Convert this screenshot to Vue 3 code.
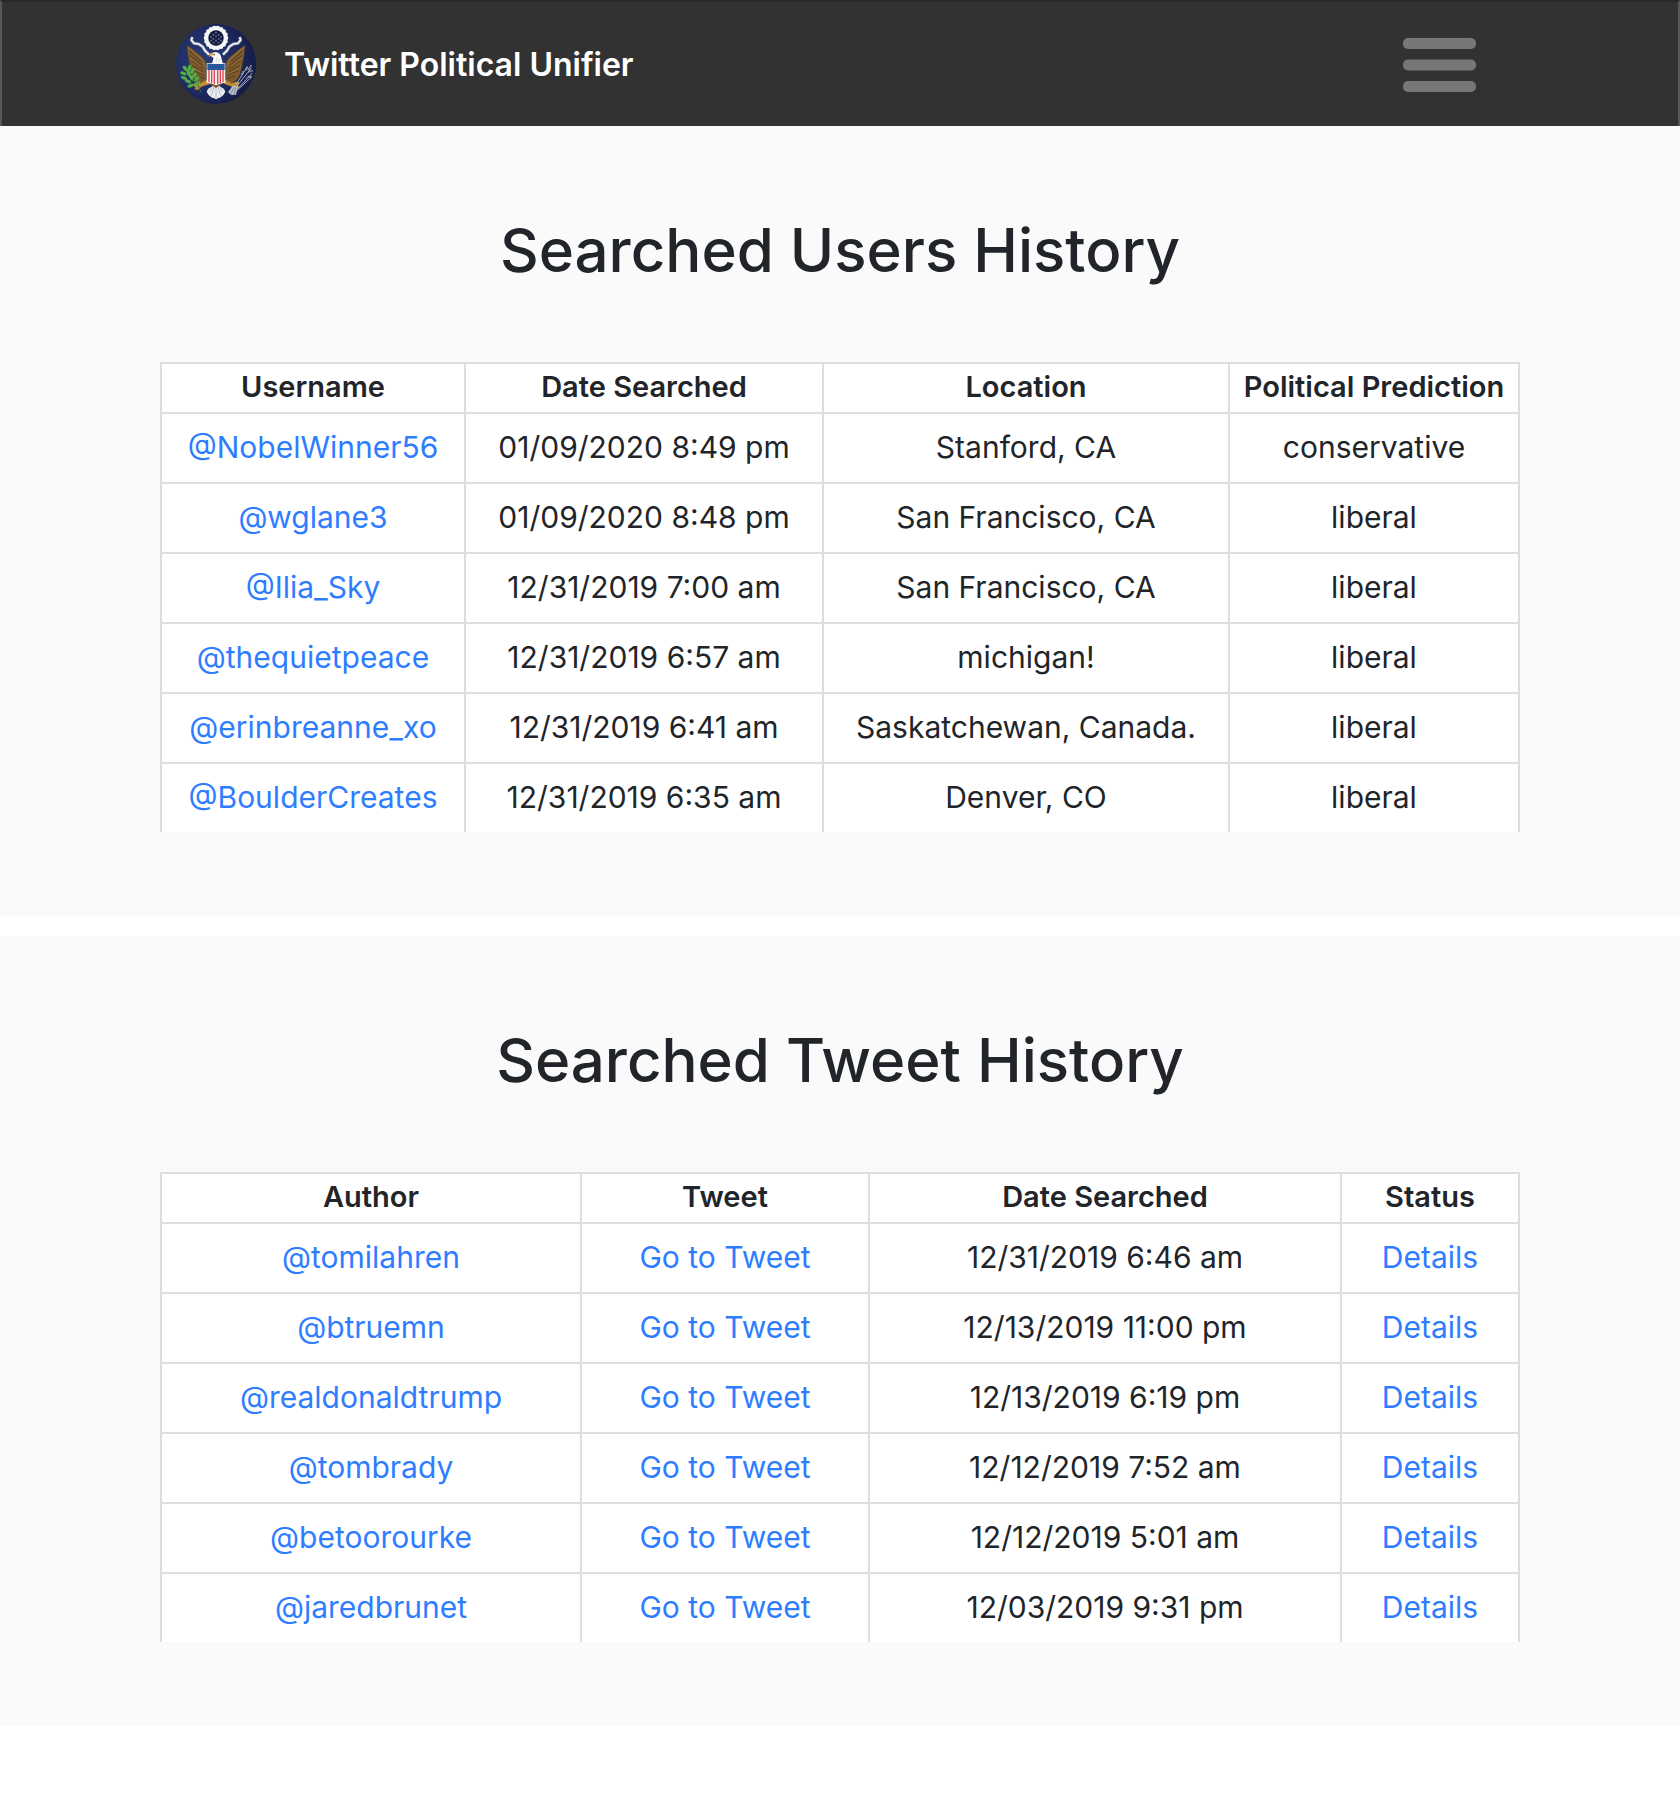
<script setup>
const userColumns = [
  { label: 'Username', size: 'w-304' },
  { label: 'Date Searched', size: 'w-358' },
  { label: 'Location', size: 'w-406' },
  { label: 'Political Prediction', size: 'w-290' },
]

const users = [
  { name: '@NobelWinner56', date: '01/09/2020 8:49 pm', location: 'Stanford, CA', prediction: 'conservative' },
  { name: '@wglane3', date: '01/09/2020 8:48 pm', location: 'San Francisco, CA', prediction: 'liberal' },
  { name: '@Ilia_Sky', date: '12/31/2019 7:00 am', location: 'San Francisco, CA', prediction: 'liberal' },
  { name: '@thequietpeace', date: '12/31/2019 6:57 am', location: 'michigan!', prediction: 'liberal' },
  { name: '@erinbreanne_xo', date: '12/31/2019 6:41 am', location: 'Saskatchewan, Canada.', prediction: 'liberal' },
  { name: '@BoulderCreates', date: '12/31/2019 6:35 am', location: 'Denver, CO', prediction: 'liberal' },
]

const tweetColumns = [
  { label: 'Author', size: 'w-420' },
  { label: 'Tweet', size: 'w-288' },
  { label: 'Date Searched', size: 'w-472' },
  { label: 'Status', size: 'w-178' },
]

const tweets = [
  { author: '@tomilahren', date: '12/31/2019 6:46 am' },
  { author: '@btruemn', date: '12/13/2019 11:00 pm' },
  { author: '@realdonaldtrump', date: '12/13/2019 6:19 pm' },
  { author: '@tombrady', date: '12/12/2019 7:52 am' },
  { author: '@betoorourke', date: '12/12/2019 5:01 am' },
  { author: '@jaredbrunet', date: '12/03/2019 9:31 pm' },
]

// Cloud puffs around the star field at the top of the seal
const puffs = Array.from({ length: 18 }, (_, i) => {
  const a = (i * Math.PI) / 9
  return { x: 168 + 30 * Math.cos(a), y: 84 + 30 * Math.sin(a) }
})

const stars = [
  [168, 68], [160, 74], [176, 74], [153, 81], [168, 79], [183, 81], [160, 87],
  [176, 87], [153, 92], [168, 92], [183, 92], [161, 98], [175, 98],
]

const oliveLeaves = [
  [76, 176, 50], [88, 174, 100], [70, 190, 25], [97, 183, 125], [72, 204, 20],
  [103, 196, 130], [84, 214, 20], [110, 207, 130], [86, 190, 70], [94, 203, 65],
  [92, 227, -20], [112, 220, 150],
]
</script>

<template>
  <div class="page">
    <header class="navbar">
      <div class="container navbar-inner">
        <a class="brand" href="#">
          <svg class="seal" viewBox="48 42 240 240" aria-hidden="true">
            <defs>
              <radialGradient id="sealField" cx="0.35" cy="0.45" r="0.7">
                <stop offset="0" stop-color="#2a3c78" />
                <stop offset="0.6" stop-color="#1d2a60" />
                <stop offset="1" stop-color="#121840" />
              </radialGradient>
            </defs>
            <circle cx="168" cy="162" r="120" fill="url(#sealField)" />

            <!-- wings -->
            <g stroke="#3a250f" stroke-width="1">
              <path d="M80 106c10 5 18 11 27 19c13 11 24 17 31 30l3 68l-24-5c-14-8-21-20-23-32c-3-9-5-18-6-27c-4-16-6-34-8-53z" fill="#7b5a2e" />
              <path d="M256 106c-10 5-18 11-27 19c-13 11-24 17-31 30l-3 68l24-5c14-8 21-20 23-32c3-9 5-18 6-27c4-16 6-34 8-53z" fill="#7b5a2e" />
            </g>
            <g fill="none" stroke="#4a3015" stroke-width="2">
              <path d="M88 122l36 33M90 136l36 30M94 150l34 26M96 166l34 20M102 182l30 14M112 198l22 8" />
              <path d="M248 122l-36 33M246 136l-36 30M242 150l-34 26M240 166l-34 20M234 182l-30 14M224 198l-22 8" />
            </g>
            <g fill="none" stroke="#a8834c" stroke-width="2">
              <path d="M85 113l38 32l12 22M91 144l32 26M98 174l32 17" />
              <path d="M251 113l-38 32l-12 22M245 144l-32 26M238 174l-32 17" />
            </g>

            <!-- ribbon -->
            <g fill="none" stroke-linejoin="round">
              <path d="M97 81l-3 9l8 10l14 2l12 8l7 12l12 12" stroke="#8d93a8" stroke-width="9" />
              <path d="M97 81l-3 9l8 10l14 2l12 8l7 12l12 12" stroke="#f2f3f6" stroke-width="5" />
              <path d="M239 81l3 9l-8 10l-14 2l-12 8l-7 12l-12 12" stroke="#8d93a8" stroke-width="9" />
              <path d="M239 81l3 9l-8 10l-14 2l-12 8l-7 12l-12 12" stroke="#f2f3f6" stroke-width="5" />
            </g>

            <!-- glory -->
            <circle cx="168" cy="84" r="31" fill="#d9dae2" />
            <circle v-for="(p, i) in puffs" :key="'p' + i" :cx="p.x" :cy="p.y" r="7" fill="#f8f8fa" />
            <circle cx="168" cy="84" r="23" fill="#141a3d" />
            <circle v-for="(s, i) in stars" :key="'s' + i" :cx="s[0]" :cy="s[1]" r="3" fill="#5c6786" />

            <!-- legs and claws -->
            <path d="M144 208l-23 12l-18-1l-5 7l9 6l-4 6l12 1l9-9l26-8z" fill="#c08b35" />
            <path d="M192 208l23 12l18-6l5 5l-5 7l7 5l-10 7l-12-7l-26-10z" fill="#c08b35" />

            <!-- olive branch -->
            <path d="M76 166c3 26 16 42 36 56l12 26" fill="none" stroke="#2f7a30" stroke-width="3" />
            <ellipse
              v-for="(l, i) in oliveLeaves"
              :key="'l' + i"
              :cx="l[0]"
              :cy="l[1]"
              rx="10"
              ry="5"
              fill="#4fae45"
              :transform="`rotate(${l[2]} ${l[0]} ${l[1]})`"
            />

            <!-- arrows -->
            <g fill="none" stroke="#a9adb8" stroke-width="3">
              <path d="M222 240l52-66M220 236l42-66M228 242l49-53M232 240l44-40" />
              <path d="M262 170l-4 12M274 166l-10 14M278 182l-14 4M274 200l-14 2M250 184l-6 12" stroke-width="5" stroke-dasharray="4 2" />
            </g>
            <path d="M218 227l-14 20l10 8l14-1l6-24z" fill="#b9bcc4" />
            <path d="M222 232l-10 20M228 232l-6 22" stroke="#6b6f7c" stroke-width="2" />

            <!-- tail -->
            <path d="M158 228l-14 9l-4 8l6 10l8 7l8 3l6 3l6-3l8-3l8-7l6-10l-4-8l-14-9z" fill="#eceef2" />
            <path d="M168 230v34M162 231l-8 26M174 231l8 26M157 232l-9 14M179 232l9 14" stroke="#9a9dab" stroke-width="2" />
            <path d="M150 222h36l-18 12z" fill="#7b5a2e" />

            <!-- head -->
            <path d="M156 162c1-9 5-14 4-19l-9-6c2-8 8-11 16-10c10 0 16 7 17 17l5 18z" fill="#fafafa" />
            <path d="M162 131c-6-3-12-2-15 4l1 7l4-5l9-1z" fill="#e5a93a" />
            <circle cx="163" cy="134" r="2" fill="#222222" />
            <path d="M168 156l4-14M177 158l1-12" stroke="#c3c6cf" stroke-width="2" />

            <!-- shield -->
            <path d="M140 160h56v58c-10 2-20 4-28 8c-8-4-18-6-28-8z" fill="#f5f2f2" />
            <path d="M142 162h52v18h-52z" fill="#28579c" />
            <path d="M147 180v37M155 180v40M163 180v42M173 180v42M181 180v40M189 180v37" stroke="#df4350" stroke-width="4" />
          </svg>
          <span class="brand-name">Twitter Political Unifier</span>
        </a>
        <button class="menu-button" type="button" aria-label="Open menu">
          <svg viewBox="0 0 73 54" aria-hidden="true">
            <rect width="73" height="11" rx="5" />
            <rect y="21.5" width="73" height="11" rx="5" />
            <rect y="43" width="73" height="11" rx="5" />
          </svg>
        </button>
      </div>
    </header>

    <main>
      <section class="history">
        <div class="container">
          <h1>Searched Users History</h1>
          <div class="table-wrap">
            <table>
              <colgroup>
                <col v-for="c in userColumns" :key="c.label" :class="c.size" />
              </colgroup>
              <thead>
                <tr>
                  <th v-for="c in userColumns" :key="c.label" scope="col">{{ c.label }}</th>
                </tr>
              </thead>
              <tbody>
                <tr v-for="u in users" :key="u.name">
                  <td><a href="#">{{ u.name }}</a></td>
                  <td>{{ u.date }}</td>
                  <td>{{ u.location }}</td>
                  <td>{{ u.prediction }}</td>
                </tr>
              </tbody>
            </table>
          </div>
        </div>
      </section>

      <section class="history">
        <div class="container">
          <h1>Searched Tweet History</h1>
          <div class="table-wrap">
            <table>
              <colgroup>
                <col v-for="c in tweetColumns" :key="c.label" :class="c.size" />
              </colgroup>
              <thead>
                <tr>
                  <th v-for="c in tweetColumns" :key="c.label" scope="col">{{ c.label }}</th>
                </tr>
              </thead>
              <tbody>
                <tr v-for="t in tweets" :key="t.author">
                  <td><a href="#">{{ t.author }}</a></td>
                  <td><a href="#">Go to Tweet</a></td>
                  <td>{{ t.date }}</td>
                  <td><a href="#">Details</a></td>
                </tr>
              </tbody>
            </table>
          </div>
        </div>
      </section>
    </main>
  </div>
</template>

<style>
body {
  background: #ffffff;
}
</style>

<style scoped>
.page {
  font-family: Inter, "Liberation Sans", sans-serif;
  font-size: 30px;
  line-height: 46px;
  color: #212529;
}

a {
  color: #2f7dff;
  text-decoration: none;
}

.container {
  box-sizing: border-box;
  max-width: 1360px;
  margin: 0 auto;
}

.navbar {
  background: #323232;
  border: 2px solid #575757;
  border-top-color: #272727;
  border-bottom: 0;
}

.navbar-inner {
  display: flex;
  align-items: center;
  justify-content: space-between;
  padding: 22px 44px 22px 16px;
}

.brand {
  display: flex;
  align-items: center;
  gap: 28px;
  color: #ffffff;
}

.seal {
  width: 80px;
  height: 80px;
}

.brand-name {
  padding-top: 2px;
  font-size: 32px;
  font-weight: 600;
}

.menu-button {
  padding: 2px 0 0;
  border: 0;
  background: none;
  cursor: pointer;
}

.menu-button svg {
  display: block;
  width: 73px;
  height: 54px;
  fill: #767778;
}

.history {
  padding: 84px 0;
  background: #fafafa;
}

.history + .history {
  margin-top: 20px;
}

h1 {
  margin: 0 0 72px;
  font-size: 60px;
  font-weight: 500;
  line-height: 80px;
  text-align: center;
}

/* Trims the outer bottom rule of the collapsed table */
.table-wrap {
  overflow: hidden;
}

table {
  width: 100%;
  margin-bottom: -2px;
  table-layout: fixed;
  border-collapse: collapse;
  background: #ffffff;
  text-align: center;
}

.w-178 { width: 178px; }
.w-288 { width: 288px; }
.w-290 { width: 290px; }
.w-304 { width: 304px; }
.w-358 { width: 358px; }
.w-406 { width: 406px; }
.w-420 { width: 420px; }
.w-472 { width: 472px; }

th,
td {
  border: 2px solid #dedede;
  white-space: nowrap;
}

th {
  padding: 0 0 2px;
  font-size: 29px;
  font-weight: 600;
}

td {
  padding: 10px 0 12px;
}
</style>
